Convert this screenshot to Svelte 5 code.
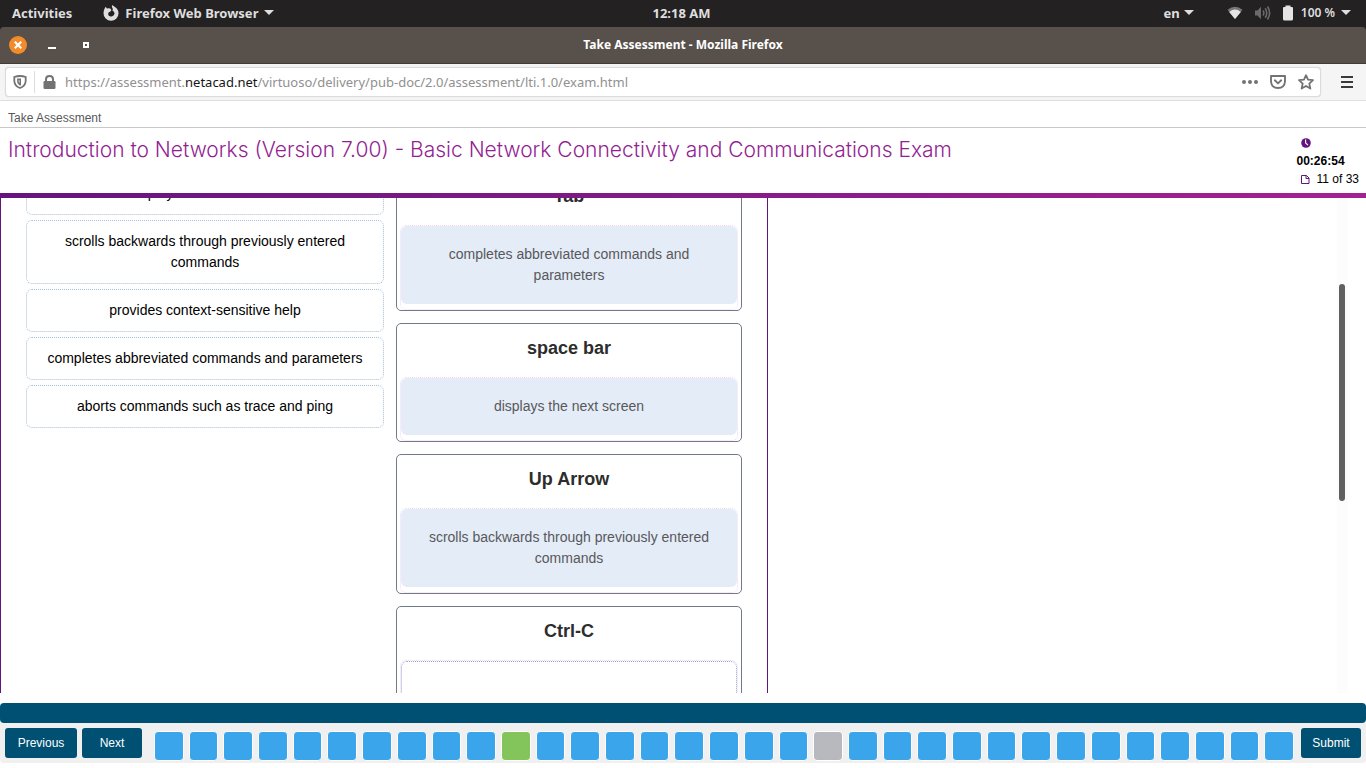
<script>
  const answers = [
    'displays the next screen',
    'scrolls backwards through previously entered commands',
    'provides context-sensitive help',
    'completes abbreviated commands and parameters',
    'aborts commands such as trace and ping',
  ];
  const targets = [
    { key: 'Tab', answer: 'completes abbreviated commands and parameters' },
    { key: 'space bar', answer: 'displays the next screen' },
    { key: 'Up Arrow', answer: 'scrolls backwards through previously entered commands' },
    { key: 'Ctrl-C', answer: '' },
  ];
  const questions = Array.from({ length: 33 }, (_, i) => ({
    n: i + 1,
    state: i === 10 ? 'current' : i === 19 ? 'skipped' : 'open',
  }));
  function scrolled(node) {
    node.scrollTop = 41;
  }
</script>

<div class="desktop">
  <header class="topbar">
    <div class="side">
      <button class="sys">Activities</button>
      <button class="sys app">
        <svg width="16" height="16" viewBox="0 0 16 16" aria-hidden="true">
          <path fill="#dedede" fill-rule="evenodd" d="M9 0 L12.3 2.2 Q15.6 4.4 15.5 8.4 A7.5 7.5 0 0 1 .5 8.3 Q.6 4.6 2.6 1.8 L4 3.6 Q5.4 2.9 7.2 3.6 L8.4 5 Q7.8 6.6 5.6 7.4 Q4.6 9 5.6 10.4 A3.6 3.6 0 0 0 11.6 8.4 Q11.4 6.6 9.4 5.6 Q10.4 4.2 9.4 2.9 Q8.6 2 9 0 Z" />
        </svg>
        Firefox Web Browser
        <i class="caret"></i>
      </button>
    </div>
    <time class="clock">12:18 AM</time>
    <div class="side end">
      <button class="sys lang">en <i class="caret"></i></button>
      <button class="sys status" aria-label="System status">
        <svg width="16" height="14" viewBox="0 0 16 14" aria-hidden="true">
          <path fill="#777576" d="M8 13 L.5 3.8 Q8-2.4 15.5 3.8 Z" />
          <path fill="#e4e4e4" d="M8 13 L2.2 5.9 Q8 1.3 13.8 5.9 Z" />
        </svg>
        <svg width="16" height="14" viewBox="0 0 16 14" aria-hidden="true" fill="none" stroke="#6b6969" stroke-width="1.6">
          <path fill="#6b6969" stroke="none" d="M0 4.5 H2.5 L6 .8 V13.2 L2.5 9.5 H0 Z" />
          <path d="M8 4.5 Q9.7 7 8 9.5 M10.2 2.2 Q13.3 7 10.2 11.8 M12.5 .5 Q16.8 7 12.5 13.5" />
        </svg>
        <svg class="battery" width="10" height="16" viewBox="0 0 10 16" aria-hidden="true">
          <path fill="#e4e4e4" d="M2.5 .5 H7.5 V2 H9 Q10 2 10 3 V14 Q10 15.5 8.5 15.5 H1.5 Q0 15.5 0 14 V3 Q0 2 1 2 H2.5 Z" />
        </svg>
        <span>100 %</span>
        <i class="caret"></i>
      </button>
    </div>
  </header>

  <div class="titlebar">
    <div class="wm">
      <button class="close" aria-label="Close">
        <svg width="8" height="8" viewBox="0 0 8 8" aria-hidden="true"><path stroke="#fff" stroke-width="2.2" d="M.7 .7 L7.3 7.3 M7.3 .7 L.7 7.3" /></svg>
      </button>
      <button class="min" aria-label="Minimize"></button>
      <button class="max" aria-label="Maximize"></button>
    </div>
    <strong>Take Assessment - Mozilla Firefox</strong>
    <div class="wm"></div>
  </div>

  <nav class="toolbar">
    <div class="urlbox">
      <svg width="14" height="14" viewBox="0 0 14 14" aria-hidden="true">
        <path fill="none" stroke="#737373" stroke-width="1.8" d="M7 1 Q10 1 12.7 2 V6 Q12.4 11 7 13 Q1.6 11 1.3 6 V2 Q4 1 7 1 Z" />
        <path fill="none" stroke="#737373" stroke-width="1.6" d="M7.2 3.6 V10.4 M7.2 4.3 H4.9 V6.8 Q5 8.4 7.2 9.8" />
      </svg>
      <span class="divider"></span>
      <svg width="13" height="14" viewBox="0 0 13 14" aria-hidden="true">
        <rect y="6" x=".5" width="12" height="8" rx="1.2" fill="#737373" />
        <path d="M3 7 V4.3 Q3 1 6.5 1 Q10 1 10 4.3 V7" fill="none" stroke="#737373" stroke-width="2" />
      </svg>
      <span class="url">https://assessment.<b>netacad.net</b>/virtuoso/delivery/pub-doc/2.0/assessment/lti.1.0/exam.html</span>
      <button class="icon" aria-label="Page actions">
        <svg width="16" height="16" viewBox="0 0 16 16" fill="#737373" aria-hidden="true"><circle cx="2" cy="8" r="2" /><circle cx="8" cy="8" r="2" /><circle cx="14" cy="8" r="2" /></svg>
      </button>
      <button class="icon" aria-label="Save to Pocket">
        <svg width="16" height="16" viewBox="0 0 16 16" fill="none" stroke="#737373" stroke-width="1.9" stroke-linecap="round" stroke-linejoin="round" aria-hidden="true"><path d="M1 2 H15 V7.5 Q14.5 14 8 14 Q1.5 14 1 7.5 Z M4.8 6.3 L8 9.4 L11.2 6.3" /></svg>
      </button>
      <button class="icon" aria-label="Bookmark this page">
        <svg width="16" height="16" viewBox="0 0 16 16" fill="none" stroke="#737373" stroke-width="1.8" stroke-linejoin="round" aria-hidden="true"><path d="M8 1.2 L10 5.7 L15 6.2 L11.3 9.6 L12.4 14.6 L8 12 L3.6 14.6 L4.7 9.6 L1 6.2 L6 5.7 Z" /></svg>
      </button>
    </div>
    <button class="menu" aria-label="Open menu">
      <svg width="12" height="12" viewBox="0 0 12 12" aria-hidden="true"><path stroke="#3a3a3c" stroke-width="2" d="M0 1 H12 M0 6 H12 M0 11 H12" /></svg>
    </button>
  </nav>

  <div class="crumb">Take Assessment</div>

  <header class="exam">
    <h1>Introduction to Networks (Version 7.00) - Basic Network Connectivity and Communications Exam</h1>
    <div class="meta">
      <svg width="10" height="10" viewBox="0 0 10 10" aria-hidden="true">
        <circle cx="5" cy="5" r="4.8" fill="#64157d" />
        <path d="M4.6 1.5 V5 L7 7.2" fill="none" stroke="#fff" stroke-width="1.1" />
      </svg>
      <b>00:26:54</b>
      <div class="progress">
        <svg width="9" height="9" viewBox="0 0 9 9" fill="none" stroke="#64157d" aria-hidden="true"><path d="M1 .5 H5.5 L8 3 V8.5 H.5 V.5 Z M5 .5 V3.5 H8" /></svg>
        <span>11 of 33</span>
      </div>
    </div>
  </header>
  <div class="stripe"></div>

  <main>
    <div class="scroller" use:scrolled>
      <div class="panel">
        <ul class="answers">
          {#each answers as a}<li>{a}</li>{/each}
        </ul>
        <div class="targets">
          {#each targets as t}
            <section>
              <h2>{t.key}</h2>
              <div class="drop">
                <div class={t.answer ? 'filled' : 'empty'}>{t.answer}</div>
              </div>
            </section>
          {/each}
        </div>
      </div>
    </div>
    <div class="track"><span></span></div>
  </main>

  <div class="band"></div>
  <footer>
    <button class="nav prev">Previous</button>
    <button class="nav">Next</button>
    <div class="tiles">
      {#each questions as q}
        <button class="tile {q.state}" aria-label={`Question ${q.n}`}></button>
      {/each}
    </div>
    <button class="nav">Submit</button>
  </footer>
</div>

<style>
  :global(body) { background: #fff; }
  * { box-sizing: border-box; }
  button { border: 0; padding: 0; background: none; font: inherit; color: inherit; }
  svg { display: block; flex: none; }
  .desktop { height: 100vh; display: flex; flex-direction: column; padding-bottom: 5px; overflow: hidden; font: 14px/21px "Liberation Sans", Arial, sans-serif; }
  .topbar { flex: none; height: 27px; background: #242122; color: #dedede; display: flex; align-items: center; font: 700 13px/20px "Noto Sans", sans-serif; padding: 0 15px 2px 12px; }
  .side { flex: 1; display: flex; align-items: center; gap: 31px; }
  .end { justify-content: flex-end; gap: 33px; }
  .sys { display: flex; align-items: center; gap: 6px; }
  .sys.lang { gap: 4px; }
  .sys.status { gap: 12px; font-size: 12px; font-weight: 600; }
  .status span { margin-right: -6px; margin-left: -4px; }
  .caret { border: 5px solid transparent; border-top-color: #dedede; border-bottom: 0; }
  .titlebar { flex: none; height: 37px; display: flex; align-items: center; background: #58504a; border-bottom: 1px solid #453b38; border-radius: 4px 4px 0 0; color: #fff; padding: 0 9px; box-shadow: 0 -5px 0 #242122; font: 12px/20px "Noto Sans", sans-serif; }
  .titlebar strong { font-weight: 700; }
  .wm { flex: 1; display: flex; align-items: center; }
  .close { width: 18px; height: 18px; border-radius: 9px; background: #f48b2b; display: grid; place-items: center; }
  .min { width: 8px; height: 2px; background: #fff; margin: 6px 27px 0 21px; }
  .max { width: 6px; height: 6px; border: 2px solid #fff; }
  .toolbar { flex: none; height: 37px; padding: 3px 13px 3px 5px; display: flex; align-items: center; gap: 20px; background: #f5f5f5; border-bottom: 1px solid #dfdfdf; }
  .urlbox { flex: 1; height: 30px; border: 1px solid #dcdcdc; border-radius: 4px; background: #fff; display: flex; align-items: center; padding: 0 6px 0 7px; gap: 8px; box-shadow: 0 0 1px #ccc; }
  .divider { width: 1px; height: 22px; background: #dcdcdc; margin-left: -1px; }
  .url { flex: 1; color: #909090; font: 13px/20px "Noto Sans", sans-serif; padding-left: 1px; white-space: nowrap; overflow: hidden; }
  .url b { font-weight: 400; color: #151515; }
  .icon { margin-left: 4px; }
  .crumb { flex: none; height: 27px; padding: 7px 8px 0; border-bottom: 1px solid #c8c8c8; font-size: 12px; line-height: 20px; color: #58585b; }
  .exam { flex: none; height: 65px; display: flex; justify-content: space-between; padding: 0 7px 0 8px; }
  h1 { margin: 0; padding-top: 8px; font: 300 21px/28px Inter, sans-serif; color: #931f93; white-space: nowrap; }
  .meta { font-size: 12px; line-height: 18px; padding-top: 10px; color: #000; display: flex; flex-direction: column; align-items: flex-start; }
  .meta > svg { margin: 0 0 4px 4px; }
  .meta b { display: block; }
  .progress { display: flex; align-items: center; gap: 7px; padding-left: 4px; }
  .stripe { flex: none; height: 5px; background: linear-gradient(90deg, #64157d, #a4218f); }
  main { flex: 1; min-height: 0; display: flex; margin-bottom: 10px; }
  .scroller { flex: 1; overflow: hidden; }
  .panel { width: 768px; border: 1px solid #64157d; border-width: 0 1px; padding: 14px 25px 40px; display: flex; gap: 12px; }
  .answers { margin: 0; padding: 1px 0 0; list-style: none; width: 358px; display: flex; flex-direction: column; gap: 5px; }
  li { border: 1px dotted #a9bdd6; border-radius: 6px; padding: 10px 20px; text-align: center; color: #000; }
  .targets { width: 346px; display: flex; flex-direction: column; gap: 12px; }
  section { border: 1px solid #717a86; border-radius: 5px; padding: 0 3px; }
  h2 { margin: 0; height: 53px; font-size: 18px; line-height: 27px; padding-top: 11px; text-align: center; color: #2d2d2d; }
  .drop { border: 1px dotted #f4d6f8; border-radius: 6px; padding-bottom: 5px; }
  .filled { background: #e4ecf7; border-radius: 6px; padding: 18px 24px; text-align: center; color: #58585b; }
  .empty { height: 58px; border: 1px dotted #8fa9c9; border-radius: 6px; }
  .track { flex: none; width: 11px; margin-right: 18px; background: #fcfcfc; padding: 86px 3px 0 2px; }
  .track span { display: block; height: 217px; border-radius: 3px; background: #606060; }
  .band { flex: none; height: 20px; border-radius: 4px; background: #005073; }
  footer { flex: none; height: 40px; background: #f0f0f0; border-radius: 0 0 4px 4px; display: flex; align-items: flex-start; padding: 5px 5px 0; gap: 5px; }
  .nav { flex: none; width: 60px; height: 30px; border-radius: 3px; background: #005073; color: #fff; font-size: 12px; line-height: 30px; }
  .prev { width: 72px; }
  .tiles { flex: 1; display: grid; grid-template-columns: repeat(33, 1fr); gap: 5px; margin: 3px 2px 0 7px; }
  .tile { height: 30px; border: 1px solid #fff; border-radius: 4px; background: #3aa5eb; }
  .tile.current { background: #83c45b; }
  .tile.skipped { background: #b8b8bf; }
</style>
